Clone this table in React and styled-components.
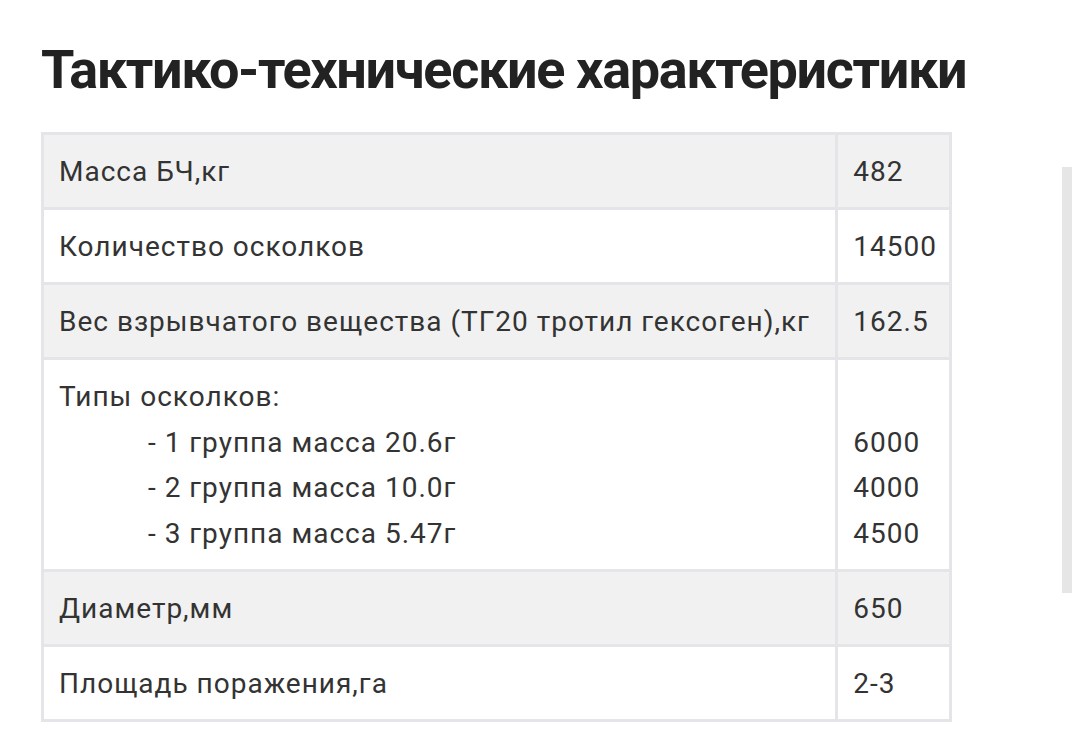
import React from "react";
import styled, { createGlobalStyle } from "styled-components";

const Global = createGlobalStyle`
  html, body { margin: 0; padding: 0; background: #fff; }
  body { font-family: Roboto, "Noto Sans", "Liberation Sans", sans-serif; color: #2f2f2f; }
`;

const Page = styled.div`
  display: flex;
  align-items: flex-start;
  width: 1072px;
  height: 748px;
  overflow: hidden;
`;

const Main = styled.main`
  padding: 36px 0 0 41px;
  width: 912px;
  flex: none;
`;

const Title = styled.h2`
  margin: 0 0 28px 0;
  font-size: 54px;
  line-height: 68px;
  font-weight: 700;
  color: #222;
  letter-spacing: -1.35px;
  white-space: nowrap;
`;

const Table = styled.table`
  border-collapse: collapse;
  width: 911px;
  border: 3px solid #e3e5e9;
`;

const Row = styled.tr`
  background: ${(p) => (p.$shaded ? "#f1f1f1" : "#fff")};
`;

const Cell = styled.td`
  border: 3px solid #e3e5e9;
  padding: 14px 12px 13px 15px;
  font-size: 28px;
  line-height: 45px;
  letter-spacing: 1px;
  color: #333;
  vertical-align: top;
  white-space: nowrap;
  width: ${(p) => p.$w || "auto"};
`;

const Line = styled.div`
  padding-left: ${(p) => (p.$indent ? "89px" : "0")};
  height: 45.5px;
`;

const Side = styled.aside`
  margin: 167px 0 0 109px;
  width: 12px;
  height: 426px;
  background: #e6e6e6;
  flex: none;
`;

const rows = [
  ["Масса БЧ,кг", "482"],
  ["Количество осколков", "14500"],
  ["Вес взрывчатого вещества (ТГ20 тротил гексоген),кг", "162.5"],
  null,
  ["Диаметр,мм", "650"],
  ["Площадь поражения,га", "2-3"],
];

const groups = [
  ["- 1 группа масса 20.6г", "6000"],
  ["- 2 группа масса 10.0г", "4000"],
  ["- 3 группа масса 5.47г", "4500"],
];

export default function App() {
  return (
    <>
      <Global />
      <Page>
        <Main>
          <Title>Тактико-технические характеристики</Title>
          <Table>
            <tbody>
              {rows.map((r, i) =>
                r ? (
                  <Row key={i} $shaded={i % 2 === 0}>
                    <Cell $w="766px">{r[0]}</Cell>
                    <Cell>{r[1]}</Cell>
                  </Row>
                ) : (
                  <Row key={i}>
                    <Cell $w="766px">
                      <Line>Типы осколков:</Line>
                      {groups.map((g) => (
                        <Line key={g[0]} $indent>{g[0]}</Line>
                      ))}
                    </Cell>
                    <Cell>
                      <Line />
                      {groups.map((g) => (
                        <Line key={g[1]}>{g[1]}</Line>
                      ))}
                    </Cell>
                  </Row>
                )
              )}
            </tbody>
          </Table>
        </Main>
        <Side />
      </Page>
    </>
  );
}
